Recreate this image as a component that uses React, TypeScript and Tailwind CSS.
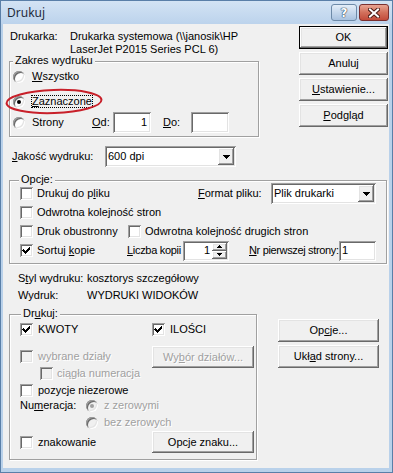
import type { ReactNode } from 'react';

const raised = "shadow-[inset_-1px_-1px_0_#696969,inset_1px_1px_0_#ffffff,inset_-2px_-2px_0_#a0a0a0,inset_2px_2px_0_#e3e3e3]";
const sunken = "shadow-[inset_1px_1px_0_#a0a0a0,inset_-1px_-1px_0_#ffffff,inset_2px_2px_0_#696969,inset_-2px_-2px_0_#e3e3e3]";
const dis = "text-[#a0a0a0] [text-shadow:1px_1px_0_#ffffff]";

const U = ({ c }: { c: string }) => <span className="underline underline-offset-[1px]">{c}</span>;

function Btn({ children, className = '', def = false, disabled = false }: { children: ReactNode; className?: string; def?: boolean; disabled?: boolean }) {
	return (
		<div className={`flex shrink-0 bg-[#f0f0f0] ${def ? 'border border-black' : ''} ${className}`}>
			<div className={`flex h-full w-full items-center justify-center ${raised} ${disabled ? dis : ''}`}>{children}</div>
		</div>
	);
}

function Check({ on = false, off = false }: { on?: boolean; off?: boolean }) {
	return (
		<div className={`relative h-[13px] w-[13px] shrink-0 ${sunken} ${off ? 'bg-[#f0f0f0]' : 'bg-white'}`}>
			{on && (
				<svg className="absolute left-0 top-0" width="13" height="13" viewBox="0 0 13 13" shapeRendering="crispEdges">
					<path d="M3 5h1v1h1v1h1v-1h1v-1h1v-1h1v-1h1v3h-1v1h-1v1h-1v1h-1v1h-1v-1h-1v-1h-1v-1h-1z" fill="#000" />
				</svg>
			)}
		</div>
	);
}

function Radio({ on = false, off = false }: { on?: boolean; off?: boolean }) {
	return (
		<div className={`flex h-[12px] w-[12px] shrink-0 items-center justify-center rounded-full ${sunken} ${off ? 'bg-[#f0f0f0]' : 'bg-white'}`}>
			{on && <div className={`h-[4px] w-[4px] rounded-full ${off ? 'bg-[#a0a0a0]' : 'bg-black'}`} />}
		</div>
	);
}

function Field({ children, className = '' }: { children?: ReactNode; className?: string }) {
	return <div className={`flex shrink-0 items-center justify-end bg-white pr-[4px] ${sunken} ${className}`}>{children}</div>;
}

function Combo({ text, className = '' }: { text: string; className?: string }) {
	return (
		<div className={`flex shrink-0 items-stretch bg-white p-[2px] ${sunken} ${className}`}>
			<div className="flex flex-1 items-center pl-[1px]">{text}</div>
			<div className={`flex w-[16px] items-center justify-center bg-[#f0f0f0] ${raised}`}>
				<svg width="7" height="4" viewBox="0 0 7 4" shapeRendering="crispEdges">
					<path d="M0 0h7v1h-1v1h-1v1h-1v1h-1v-1h-1v-1h-1v-1h-1z" fill="#000" />
				</svg>
			</div>
		</div>
	);
}

function Group({ label, labelLeft, className = '', children }: { label: ReactNode; labelLeft: string; className?: string; children: ReactNode }) {
	return (
		<div className={`relative shrink-0 border border-[#a0a0a0] shadow-[inset_1px_1px_0_#ffffff,1px_1px_0_#ffffff] ${className}`}>
			<div className={`absolute top-[-8px] bg-[#f0f0f0] px-[2px] ${labelLeft}`}>{label}</div>
			{children}
		</div>
	);
}

export default function App() {
	return (
		<div className="h-[473px] w-[393px] overflow-hidden whitespace-nowrap border border-[#5a7fa8] bg-[#b9d1ea] font-['Liberation_Sans',Arial,sans-serif] text-[11px] leading-[13px] text-black">
			{/* title bar */}
			<div className="flex h-[23px] items-center bg-gradient-to-b from-[#d3e3f4] to-[#bcd3ec] pl-[6px] pr-[3px]">
				<div className="font-['Noto_Sans',sans-serif] text-[12px] text-[#1e2b3c]">Drukuj</div>
				<div className="ml-auto flex gap-[2px]">
					<div className="flex h-[17px] w-[26px] items-center justify-center rounded-[3px] border border-[#6d8aa8] bg-gradient-to-b from-[#e4eef8] via-[#c6d8ec] to-[#a9c2df]">
						<span className="font-['DejaVu_Sans',sans-serif] text-[12px] font-bold leading-none text-white [text-shadow:0_0_1px_#2b3f57,0_0_1px_#2b3f57,0_0_1px_#2b3f57]">?</span>
					</div>
					<div className="flex h-[17px] w-[30px] items-center justify-center rounded-[3px] border border-[#7a3030] bg-gradient-to-b from-[#e8a493] via-[#d2705c] to-[#c24a3a]">
						<svg width="12" height="10" viewBox="0 0 12 10">
							<path d="M2 1.5L10 8.5M10 1.5L2 8.5" stroke="#4a1a14" strokeWidth="4" strokeLinecap="square" />
							<path d="M2 1.5L10 8.5M10 1.5L2 8.5" stroke="#ffffff" strokeWidth="2" strokeLinecap="square" />
						</svg>
					</div>
				</div>
			</div>

			{/* client */}
			<div className="ml-[2px] h-[444px] w-[386px] bg-[#f0f0f0] pl-[6px]">
				<div className="flex pt-[2px]">
					<div className="w-[250px] shrink-0">
						<div className="ml-[1px] mt-[4px] flex">
							<div className="w-[60px] shrink-0">Drukarka:</div>
							<div>
								Drukarka systemowa (\\janosik\HP
								<br />
								LaserJet P2015 Series PCL 6)
							</div>
						</div>
						<Group label="Zakres wydruku" labelLeft="left-[3px]" className="mt-[5px] h-[76px] w-[250px] pl-[3px] pt-[4px]">
							<div className="flex h-[21px] items-center">
								<Radio />
								<span className="ml-[7px]"><U c="W" />szystko</span>
							</div>
							<div className="mt-[4px] flex h-[21px] items-center">
								<Radio on />
								<span className="ml-[6px] border border-dotted border-black leading-[11px]"><U c="Z" />aznaczone</span>
							</div>
							<div className="flex h-[21px] items-center">
								<Radio />
								<span className="ml-[7px] w-[60px] shrink-0">Strony</span>
								<span className="w-[21px] shrink-0"><U c="O" />d:</span>
								<Field className="h-[21px] w-[38px]">1</Field>
								<span className="ml-[12px] w-[28px] shrink-0"><U c="D" />o:</span>
								<Field className="h-[21px] w-[38px]" />
							</div>
							<svg className="pointer-events-none absolute left-[-5px] top-[26px]" width="99" height="27" viewBox="0 0 99 27">
								<ellipse cx="49" cy="13.5" rx="47.5" ry="11.5" transform="rotate(-2 49 13.5)" fill="none" stroke="#c8202a" strokeWidth="2" />
							</svg>
						</Group>
					</div>
					<div className="ml-[40px] flex w-[89px] flex-col gap-[3px]">
						<Btn def className="h-[23px]">OK</Btn>
						<Btn className="h-[23px]">Anuluj</Btn>
						<Btn className="h-[23px]"><span><U c="U" />stawienie...</span></Btn>
						<Btn className="h-[23px]"><span><U c="P" />odgląd</span></Btn>
					</div>
				</div>

				<div className="mt-[9px] flex h-[21px] items-center">
					<span className="ml-[3px] w-[93px] shrink-0"><U c="J" />akość wydruku:</span>
					<Combo text="600 dpi" className="h-[21px] w-[131px]" />
				</div>

				<Group label="Opcje:" labelLeft="left-[9px]" className="mt-[13px] h-[84px] w-[378px] pl-[10px] pt-[3px]">
					<div className="flex h-[19px] items-center">
						<div className="flex w-[178px] shrink-0 items-center">
							<Check />
							<span className="ml-[4px]">Drukuj do p<U c="l" />iku</span>
						</div>
						<span className="w-[73px] shrink-0"><U c="F" />ormat pliku:</span>
						<Combo text="Plik drukarki" className="h-[21px] w-[105px]" />
					</div>
					<div className="flex h-[19px] items-center">
						<Check />
						<span className="ml-[4px]">Odwrotna kolejność stron</span>
					</div>
					<div className="flex h-[19px] items-center">
						<div className="flex w-[108px] shrink-0 items-center">
							<Check />
							<span className="ml-[4px]">Druk obustronny</span>
						</div>
						<Check />
						<span className="ml-[4px]">Odwrotna kolejność drugich stron</span>
					</div>
					<div className="flex h-[19px] items-center">
						<div className="flex w-[107px] shrink-0 items-center">
							<Check on />
							<span className="ml-[4px]">Sortuj <U c="k" />opie</span>
						</div>
						<span className="w-[56px] shrink-0 tracking-[-0.3px]"><U c="L" />iczba kopii</span>
						<div className={`flex h-[20px] w-[46px] shrink-0 items-stretch bg-white p-[2px] ${sunken}`}>
							<div className="flex flex-1 items-center justify-end pr-[2px]">1</div>
							<div className="flex w-[15px] flex-col">
								<div className={`flex flex-1 items-center justify-center bg-[#f0f0f0] ${raised}`}>
									<svg width="5" height="3" viewBox="0 0 5 3" shapeRendering="crispEdges"><path d="M2 0h1v1h1v1h1v1h-5v-1h1v-1h1z" fill="#000" /></svg>
								</div>
								<div className={`flex flex-1 items-center justify-center bg-[#f0f0f0] ${raised}`}>
									<svg width="5" height="3" viewBox="0 0 5 3" shapeRendering="crispEdges"><path d="M0 0h5v1h-1v1h-1v1h-1v-1h-1v-1h-1z" fill="#000" /></svg>
								</div>
							</div>
						</div>
						<span className="ml-[20px] w-[90px] shrink-0 tracking-[-0.35px]"><U c="N" />r pierwszej strony:</span>
						<div className={`flex h-[20px] w-[37px] shrink-0 items-center bg-white pl-[3px] ${sunken}`}>1</div>
					</div>
				</Group>

				<div className="mt-[6px] pl-[9px]">
					<div className="flex h-[17px] items-center">
						<span className="w-[69px] shrink-0">S<U c="t" />yl wydruku:</span>
						<span>kosztorys szczegółowy</span>
					</div>
					<div className="flex h-[17px] items-center">
						<span className="w-[69px] shrink-0">Wydruk:</span>
						<span>WYDRUKI WIDOKÓW</span>
					</div>
				</div>

				<div className="mt-[10px] flex">
					<Group label={<span>Dr<U c="u" />kuj:</span>} labelLeft="left-[11px]" className="flex h-[146px] w-[248px] pl-[10px] pt-[6px]">
						<div className="w-[132px] shrink-0">
							<div className="flex h-[17px] items-center">
								<Check on />
								<span className="ml-[5px]">KWOTY</span>
							</div>
							<div className="mt-[10px] flex h-[17px] items-center">
								<Check off />
								<span className={`ml-[5px] ${dis}`}>wybrane działy</span>
							</div>
							<div className="flex h-[17px] items-center pl-[20px]">
								<Check off />
								<span className={`ml-[4px] ${dis}`}>ciągła numeracja</span>
							</div>
							<div className="flex h-[17px] items-center">
								<Check />
								<span className="ml-[5px]">pozycje niezerowe</span>
							</div>
							<div className="mt-[-2px] flex h-[17px] items-center">
								<span className="w-[66px] shrink-0">Nu<U c="m" />eracja:</span>
								<Radio on off />
								<span className={`ml-[6px] ${dis}`}>z zerowymi</span>
							</div>
							<div className="flex h-[17px] items-center pl-[66px]">
								<Radio off />
								<span className={`ml-[6px] ${dis}`}>bez zerowych</span>
							</div>
							<div className="mt-[3px] flex h-[17px] items-center">
								<Check />
								<span className="ml-[5px]">znakowanie</span>
							</div>
						</div>
						<div className="w-[102px] shrink-0">
							<div className="flex h-[17px] items-center">
								<Check on />
								<span className="ml-[5px]">ILOŚCI</span>
							</div>
							<Btn disabled className="mt-[8px] h-[22px] w-[102px]"><span>Wy<U c="b" />ór działów...</span></Btn>
							<Btn className="mt-[63px] h-[22px] w-[102px]">Opcje znaku...</Btn>
						</div>
					</Group>
					<div className="ml-[21px] mt-[5px] flex w-[101px] flex-col gap-[3px]">
						<Btn className="h-[23px]"><span>Op<U c="c" />je...</span></Btn>
						<Btn className="h-[23px]"><span>Ukł<U c="a" />d strony...</span></Btn>
					</div>
				</div>
			</div>
		</div>
	);
}
